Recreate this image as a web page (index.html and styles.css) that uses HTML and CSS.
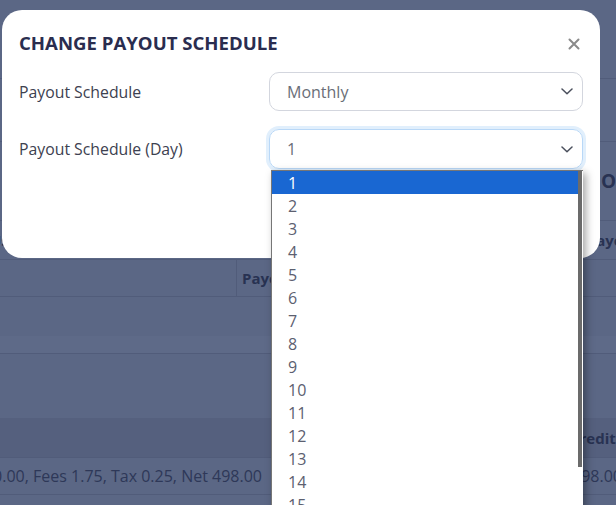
FILE: index.html
```html
<!DOCTYPE html>
<html>
<head>
<meta charset="utf-8">
<link rel="stylesheet" href="styles.css">
</head>
<body>
<div class="page">
  <div class="row r0"></div>
  <div class="row r1"></div>
  <div class="row r2"><span class="cell-right bold">Order</span></div>
  <div class="row r3"><span class="cell-left bold">Us</span><span class="cell-right2 bold">Payout</span></div>
  <div class="row r4"><div class="col-a"></div><div class="col-b bold">Payout</div></div>
  <div class="row r5"></div>
  <div class="row r6"></div>
  <div class="row r7"></div>
  <div class="row r8"><span class="cell-credit bold">Credit</span></div>
  <div class="row r9"><div class="clip"><span>Gross 500.00, Fees 1.75, Tax 0.25, Net 498.00</span></div><span class="cell-amt">498.00</span></div>
  <div class="row r10"></div>
</div>

<div class="modal">
  <div class="modal-head">
    <h2 class="title">CHANGE PAYOUT SCHEDULE</h2>
    <svg class="close" width="12" height="12" viewBox="0 0 12 12"><path d="M1.5 1.5 L10.5 10.5 M10.5 1.5 L1.5 10.5" stroke="#8a8a8a" stroke-width="2" stroke-linecap="round"/></svg>
  </div>
  <div class="form-row">
    <label class="label">Payout Schedule</label>
    <div class="select">
      <span>Monthly</span>
      <svg class="chev" width="12" height="7" viewBox="0 0 12 7"><path d="M1 1 L6 5.8 L11 1" fill="none" stroke="#4a4f5c" stroke-width="1.5" stroke-linecap="round" stroke-linejoin="round"/></svg>
    </div>
  </div>
  <div class="form-row row2">
    <label class="label">Payout Schedule (Day)</label>
    <div class="select focus">
      <span>1</span>
      <svg class="chev" width="12" height="7" viewBox="0 0 12 7"><path d="M1 1 L6 5.8 L11 1" fill="none" stroke="#4a4f5c" stroke-width="1.5" stroke-linecap="round" stroke-linejoin="round"/></svg>
    </div>
  </div>
</div>

<div class="dropdown">
  <div class="opt sel">1</div>
  <div class="opt">2</div>
  <div class="opt">3</div>
  <div class="opt">4</div>
  <div class="opt">5</div>
  <div class="opt">6</div>
  <div class="opt">7</div>
  <div class="opt">8</div>
  <div class="opt">9</div>
  <div class="opt">10</div>
  <div class="opt">11</div>
  <div class="opt">12</div>
  <div class="opt">13</div>
  <div class="opt">14</div>
  <div class="opt">15</div>
  <div class="opt">16</div>
  <div class="thumb"></div>
</div>
</body>
</html>
```

FILE: styles.css
```css
html, body {
  margin: 0;
  padding: 0;
  width: 616px;
  height: 505px;
  overflow: hidden;
  background: #5b6785;
  font-family: "Open Sans", "Noto Sans", sans-serif;
}

.page {
  display: flex;
  flex-direction: column;
  color: #2e3858;
  font-size: 15px;
}

.bold { font-weight: 700; color: #283252; }

.row {
  box-sizing: border-box;
  border-bottom: 1px solid #515c7a;
  display: flex;
  align-items: center;
  position: relative;
  white-space: nowrap;
}
.r0 { height: 79px; }
.r1 { height: 63px; }
.r2 { height: 79px; }
.r3 { height: 39px; }
.r4 { height: 37px; align-items: stretch; }
.r5 { height: 39px; border-bottom: none; }
.r6 { height: 18px; background: #5e6a88; }
.r7 { height: 64px; border-bottom: none; }
.r8 { height: 40px; background: #55607e; }
.r9 { height: 37px; font-size: 16px; }
.r10 { height: 60px; border-bottom: none; }

.cell-right { margin-left: 601px; font-size: 19px; }
.cell-left { margin-left: -10px; }
.cell-right2 { margin-left: 578px; }

.col-a { width: 236px; border-right: 1px solid #515c7a; }
.col-b { padding-left: 5px; display: flex; align-items: center; }

.cell-credit { margin-left: 570px; }

.clip {
  flex: none;
  width: 262px;
  overflow: hidden;
  display: flex;
  justify-content: flex-end;
}
.cell-amt { flex: none; margin-left: 310px; }

/* Modal */
.modal {
  position: absolute;
  left: 2px;
  top: 10px;
  width: 598px;
  height: 248px;
  box-sizing: border-box;
  background: #fff;
  border-radius: 20px;
  padding: 20px 17px 0 17px;
}

.modal-head {
  display: flex;
  align-items: center;
  justify-content: space-between;
  height: 24px;
  padding-right: 3px;
}

.title {
  margin: 0;
  font-size: 18.6px;
  font-weight: 700;
  color: #2a2d4f;
}

.close { margin-top: 4px; }

.form-row {
  display: grid;
  grid-template-columns: 250px 1fr;
  align-items: center;
  margin-top: 18px;
}
.row2 { margin-top: 18px; }

.label {
  font-size: 15.8px;
  color: #3d4150;
}

.select {
  box-sizing: border-box;
  height: 39px;
  border: 1px solid #d3d6de;
  border-radius: 10px;
  display: flex;
  align-items: center;
  justify-content: space-between;
  padding: 0 9px 0 17px;
  font-size: 16px;
  color: #6a6e78;
}
.select.focus {
  height: 40px;
  border-color: #b9d8f7;
  box-shadow: 0 0 0 3px #e1effc;
}

/* Dropdown popup */
.dropdown {
  position: absolute;
  left: 271px;
  top: 170px;
  width: 312px;
  height: 360px;
  box-sizing: border-box;
  background: #fff;
  border: 1px solid #767676;
  border-right: none;
  box-shadow: 3px 3px 8px rgba(0,0,0,0.35);
  overflow: hidden;
  font-size: 16px;
  color: #5c6070;
}

.opt {
  height: 23px;
  line-height: 24px;
  padding-left: 16px;
}
.opt.sel {
  background: #1967d2;
  color: #fff;
  margin-right: 5px;
}

.thumb {
  position: absolute;
  right: 1px;
  top: 0;
  width: 4px;
  height: 296px;
  background: #6b6b6b;
}
```
